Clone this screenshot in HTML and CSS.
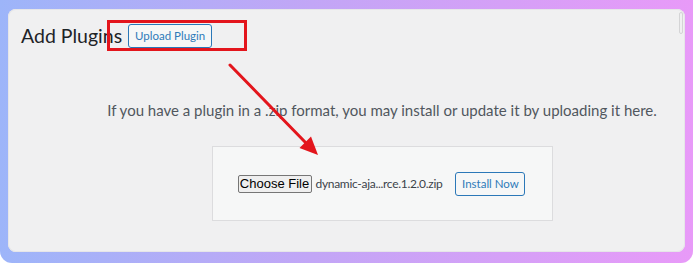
FILE: index.html
```html
<!DOCTYPE html>
<html lang="en">
<head>
<meta charset="utf-8">
<title>Add Plugins</title>
<link rel="stylesheet" href="styles.css">
</head>
<body>
<div class="frame">
  <div class="panel">
    <div class="header">
      <h1 class="title">Add Plugins</h1>
      <button class="wp-btn upload-btn">Upload Plugin</button>
    </div>
    <div class="content">
      <p class="desc">If you have a plugin in a .zip format, you may install or update it by uploading it here.</p>
      <div class="upload-box">
        <button class="file-btn">Choose File</button>
        <span class="file-name">dynamic-aja...rce.1.2.0.zip</span>
        <button class="wp-btn install-btn">Install Now</button>
      </div>
    </div>
    <div class="scroll-thumb"></div>
  </div>
  <div class="highlight"></div>
  <svg class="arrow" width="693" height="265" viewBox="0 0 693 265" aria-hidden="true">
    <line x1="230" y1="65" x2="306" y2="143" stroke="#e3151c" stroke-width="3" stroke-linecap="round"/>
    <polygon points="318,155 299.5,148 311,136.5" fill="#e3151c"/>
  </svg>
</div>
</body>
</html>
```
FILE: styles.css
```css
html, body {
  margin: 0;
  padding: 0;
  background: #ffffff;
}
body {
  width: 693px;
  height: 265px;
  overflow: hidden;
  font-family: Lato, "Open Sans", "Liberation Sans", sans-serif;
}
.frame {
  position: relative;
  width: 693px;
  height: 263px;
  box-sizing: border-box;
  padding: 9px 8px 11px 8px;
  background: linear-gradient(90deg, #9db5f9 0%, #c2a6f6 45%, #e89af8 100%);
  border-radius: 0 0 12px 12px;
}
.panel {
  position: relative;
  height: 100%;
  background: #f0f0f1;
  border-radius: 8px;
  box-shadow: inset 0 0 0 1px #e6e6e8;
}
.header {
  display: flex;
  align-items: center;
  gap: 6px;
  padding: 15px 0 0 13px;
  height: 24px;
}
.title {
  margin: 0;
  font-family: Lato, "Open Sans", sans-serif;
  font-weight: 400;
  font-size: 19.5px;
  line-height: 24px;
  color: #1d2327;
  white-space: nowrap;
}
.wp-btn {
  box-sizing: border-box;
  flex: none;
  height: 24px;
  padding: 0;
  border: 1px solid #2b78b8;
  border-radius: 3px;
  background: #f6f7f7;
  color: #2f7bb9;
  font-family: Lato, "Open Sans", sans-serif;
  font-size: 11.5px;
  line-height: 22px;
  white-space: nowrap;
  text-align: center;
}
.upload-btn {
  width: 84px;
}
.install-btn {
  width: 70px;
  margin-left: 13px;
}
.content {
  width: 554px;
  margin-left: 97px;
  text-align: center;
}
.desc {
  margin: 52px 0 0 0;
  font-family: Lato, "Open Sans", sans-serif;
  font-size: 15px;
  line-height: 20px;
  color: #50575e;
  white-space: nowrap;
}
.upload-box {
  box-sizing: border-box;
  width: 341px;
  height: 75px;
  margin: 26px auto 0 auto;
  background: #f6f7f7;
  border: 1px solid #dcdcde;
  display: flex;
  align-items: center;
  padding: 0 0 0 25px;
}
.file-btn {
  box-sizing: border-box;
  flex: none;
  width: 74px;
  height: 18px;
  padding: 0;
  background: #efefef;
  border: 1px solid #767676;
  border-radius: 2px;
  font-family: "Liberation Sans", Arial, sans-serif;
  font-size: 13px;
  line-height: 16px;
  color: #000000;
  white-space: nowrap;
}
.file-name {
  margin-left: 4px;
  font-family: Lato, "Open Sans", sans-serif;
  font-size: 12px;
  letter-spacing: -0.3px;
  color: #3c434a;
  white-space: nowrap;
}
.scroll-thumb {
  position: absolute;
  top: 3px;
  right: 2px;
  width: 2px;
  height: 20px;
  border: 1px solid #d4d4d6;
  border-radius: 2px;
}
.highlight {
  position: absolute;
  left: 107px;
  top: 20px;
  width: 140px;
  height: 31px;
  box-sizing: border-box;
  border: 3px solid #e3151c;
}
.arrow {
  position: absolute;
  left: 0;
  top: 0;
}
```
